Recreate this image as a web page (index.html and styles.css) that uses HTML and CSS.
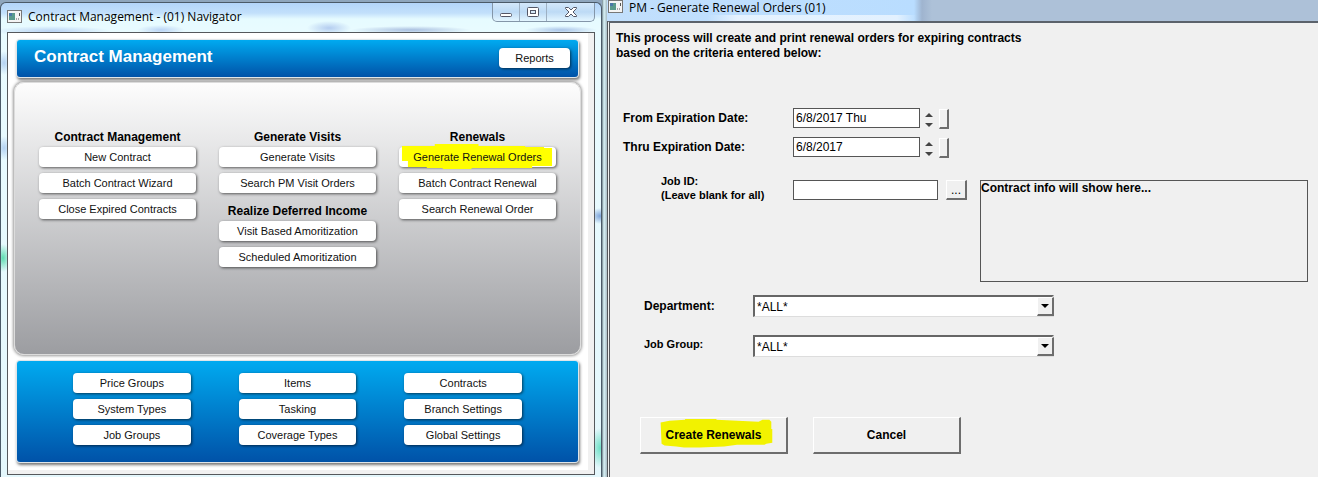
FILE: index.html
```html
<!DOCTYPE html>
<html lang="en">
<head>
    <meta charset="UTF-8">
    <title>Contract Management</title>
    <meta name="viewport" content="width=device-width, initial-scale=1.0"/>
    <link rel="stylesheet" href="styles.css">
</head>
<body>

<div class="desktop">

    <!--navigator window-->
    <section class="window navigator">
        <div class="titlebar">
            <svg class="app-icon" width="15" height="13" viewBox="0 0 15 13" aria-hidden="true">
                <rect x="0.5" y="0.5" width="14" height="12" fill="#f4f4f4" stroke="#777"/>
                <rect x="2" y="3" width="6" height="7" fill="#5a9a8c"/>
                <path d="M2 3h3v3H2z" fill="#4a78a8"/>
                <path d="M9 9h1M11 9h1M12.500 3v3" stroke="#555"/>
            </svg>
            <span class="title">Contract Management - (01) Navigator</span>
            <div class="window-buttons">
                <button aria-label="Minimize"><svg width="14" height="12" viewBox="0 0 14 12"><rect x="1.500" y="7.500" width="11" height="3" rx="1" fill="#fff" stroke="#535666"/></svg></button>
                <button aria-label="Maximize"><svg width="14" height="12" viewBox="0 0 14 12"><rect x="1.500" y="1.500" width="11" height="9" rx="1" fill="#fff" stroke="#535666"/><rect x="4.500" y="4.500" width="5" height="3" fill="#d5e8f8" stroke="#535666"/></svg></button>
                <button class="wide" aria-label="Close"><svg width="14" height="12" viewBox="0 0 14 12"><path d="M1.500 1.500h3L7 4l2.500-2.500h3v1L9 6l3.500 3.500v1h-3L7 8l-2.500 2.500h-3v-1L5 6 1.500 2.500z" fill="#fff" stroke="#535666"/></svg></button>
            </div>
        </div>

        <div class="client">
            <header class="banner">
                <h1>Contract Management</h1>
                <button class="pill">Reports</button>
            </header>

            <main class="panel">
                <div class="column">
                    <h2>Contract Management</h2>
                    <button class="pill">New Contract</button>
                    <button class="pill">Batch Contract Wizard</button>
                    <button class="pill">Close Expired Contracts</button>
                </div>
                <div class="column">
                    <h2>Generate Visits</h2>
                    <button class="pill">Generate Visits</button>
                    <button class="pill">Search PM Visit Orders</button>
                    <h2 class="second">Realize Deferred Income</h2>
                    <button class="pill">Visit Based Amoritization</button>
                    <button class="pill">Scheduled Amoritization</button>
                </div>
                <div class="column">
                    <h2>Renewals</h2>
                    <button class="pill marked">
                        <svg class="marker" viewBox="0 0 158 26" preserveAspectRatio="none" aria-hidden="true"><path d="M3 3H36V1H80V3H127V4H146V5H154V23H134V25H73V26H44V25H28V24H9V18H3z" fill="#ff0"/></svg>
                        <span>Generate Renewal Orders</span>
                    </button>
                    <button class="pill">Batch Contract Renewal</button>
                    <button class="pill">Search Renewal Order</button>
                </div>
            </main>

            <nav class="shortcuts">
                <button class="pill">Price Groups</button>
                <button class="pill">Items</button>
                <button class="pill">Contracts</button>
                <button class="pill">System Types</button>
                <button class="pill">Tasking</button>
                <button class="pill">Branch Settings</button>
                <button class="pill">Job Groups</button>
                <button class="pill">Coverage Types</button>
                <button class="pill">Global Settings</button>
            </nav>
        </div>
    </section>

    <!--renewal orders window-->
    <section class="window renewals">
        <div class="titlebar">
            <svg class="app-icon" width="15" height="13" viewBox="0 0 15 13" aria-hidden="true">
                <rect x="0.5" y="0.5" width="14" height="12" fill="#f4f4f4" stroke="#777"/>
                <rect x="2" y="3" width="6" height="7" fill="#5a9a8c"/>
                <path d="M2 3h3v3H2z" fill="#4a78a8"/>
                <path d="M9 9h1M11 9h1M12.500 3v3" stroke="#555"/>
            </svg>
            <span class="title">PM - Generate Renewal Orders (01)</span>
        </div>

        <form class="renewal-form">
            <p class="intro">This process will create and print renewal orders for expiring contracts<br>based on the criteria entered below:</p>

            <div class="row date-row">
                <label for="from_date">From Expiration Date:</label>
                <input id="from_date" type="text" value="6/8/2017 Thu">
                <span class="spinner">
                    <button type="button" class="up" aria-label="Next day"></button>
                    <button type="button" class="down" aria-label="Previous day"></button>
                </span>
                <button type="button" class="raised picker" aria-label="Pick from date"></button>
            </div>
            <div class="row date-row">
                <label for="thru_date">Thru Expiration Date:</label>
                <input id="thru_date" type="text" value="6/8/2017">
                <span class="spinner">
                    <button type="button" class="up" aria-label="Next day"></button>
                    <button type="button" class="down" aria-label="Previous day"></button>
                </span>
                <button type="button" class="raised picker" aria-label="Pick thru date"></button>
            </div>

            <div class="row job-row">
                <label for="job_id">Job ID:<br>(Leave blank for all)</label>
                <input id="job_id" type="text">
                <button type="button" class="raised browse" aria-label="Browse jobs">...</button>
                <div class="contract-info">Contract info will show here...</div>
            </div>

            <div class="row select-row">
                <label for="department">Department:</label>
                <span class="select-box">
                    <select id="department"><option>*ALL*</option></select>
                    <span class="arrow"></span>
                </span>
            </div>
            <div class="row select-row">
                <label for="job_group" class="small">Job Group:</label>
                <span class="select-box">
                    <select id="job_group"><option>*ALL*</option></select>
                    <span class="arrow"></span>
                </span>
            </div>

            <div class="actions">
                <button type="button" class="raised marked">
                    <svg class="marker" viewBox="0 0 148 37" preserveAspectRatio="none" aria-hidden="true"><path d="M20 5L29 3L45 2V1H77V2L120 4L124 2H131L133 4V12H134V27L128 28L126 29H98L85 31L60 32H44L36 31L24 30L21 28z" fill="#f2f200"/></svg>
                    <span>Create Renewals</span>
                </button>
                <button type="button" class="raised">Cancel</button>
            </div>
        </form>
    </section>

</div>

</body>
</html>
```
FILE: styles.css
```css
* {
    box-sizing: border-box;
}

body {
    margin: 0;
    background: #8fa6bd;
    font-family: "Liberation Sans", Arial, sans-serif;
    font-size: 12px;
    color: #000;
}

button, input, select {
    margin: 0;
    padding: 0;
    font: inherit;
    color: inherit;
}

h1, h2, p {
    margin: 0;
}

.desktop {
    display: grid;
    grid-template-columns: 602fr 716fr;
    min-height: 100vh;
    overflow: hidden;
}

.window {
    display: flex;
    flex-direction: column;
}

.titlebar {
    display: flex;
    font-family: "Open Sans", "Noto Sans", sans-serif;
    font-size: 12px;
}

.title {
    flex: 1;
    white-space: nowrap;
}

/* navigator */
.navigator {
    margin-top: 2px;
    padding: 0 6px 2px;
    border: 1px solid #4b5a68;
    border-bottom: 0;
    border-radius: 6px 6px 0 0;
    background:
        radial-gradient(ellipse 60px 5px at 50px 28px, #b9d3f4, transparent),
        radial-gradient(ellipse 24px 5px at 160px 27px, #b9d3f4, transparent),
        radial-gradient(ellipse 22px 7px at 328px 25px, #b4cdf0, transparent),
        radial-gradient(ellipse 60px 4px at 410px 27px, #a9bfe0, transparent),
        radial-gradient(ellipse 36px 4px at 560px 27px, #a9c4e8, transparent),
        radial-gradient(ellipse 8px 12px at 3px 60px, #b4d2f2, transparent),
        radial-gradient(ellipse 8px 12px at 3px 145px, #b4d2f2, transparent),
        radial-gradient(ellipse 8px 14px at 2px 255px, #5fdcb0, transparent),
        radial-gradient(ellipse 10px 8px at 599px 213px, #7ea4da, transparent),
        radial-gradient(ellipse 10px 20px at 599px 445px, #6fe0c6, transparent),
        linear-gradient(#b3d5fa 0, #c2e0fb 10px, #e6fbff 16px, #e9fbff 30px, #e4f7fc);
}

.navigator .titlebar {
    height: 29px;
}

.navigator .app-icon {
    margin-top: 7px;
}

.navigator .title {
    margin: 5px 0 0 6px;
    line-height: 18px;
}

.window-buttons {
    display: flex;
    height: 19px;
    border: 1px solid #8496a8;
    border-top: 0;
    border-radius: 0 0 5px 5px;
    background: linear-gradient(#d3e8fb, #bddaf5 50%, #e4f6ff);
}

.window-buttons button {
    display: flex;
    justify-content: center;
    align-items: center;
    width: 27px;
    border: 0;
    border-right: 1px solid #9db0c3;
    background: none;
}

.window-buttons .wide {
    width: 47px;
    border-right: 0;
}

.client {
    display: flex;
    flex: 1;
    flex-direction: column;
    padding: 7px 13px 12px 6px;
    border: 1px solid #55585c;
    background: #fff;
    box-shadow: inset -6px -4px 0 #f1f1f1;
}

.banner {
    display: flex;
    justify-content: space-between;
    align-items: center;
    height: 37px;
    margin: 0 3px;
    padding: 0 8px 0 17px;
    border-radius: 3px;
    background: linear-gradient(#00aaf0, #0052a8);
    box-shadow: 0 0 0 1px #dfe6ea, 1px 2px 3px 1px #777;
}

.banner h1 {
    margin-bottom: 3px;
    font-size: 17px;
    line-height: 20px;
    color: #fff;
}

.banner .pill {
    width: 71px;
    margin-bottom: 2px;
}

.pill {
    height: 20px;
    border: 0;
    border-radius: 4px;
    background: #fff;
    font-size: 11px;
    line-height: 20px;
    color: #111;
    box-shadow: 1px 1px 3px rgba(0, 0, 0, 0.6);
    white-space: nowrap;
}

.panel {
    display: grid;
    flex: 1;
    grid-template-columns: repeat(3, 1fr);
    gap: 23px;
    margin: 5px 0 6px;
    padding: 46px 24px 0;
    border: 1px solid #dcdcdc;
    border-radius: 10px;
    background: linear-gradient(#fdfdfd, #9c9da1);
    box-shadow: 0 0 3px 1px #999;
}

.column {
    display: flex;
    flex-direction: column;
    gap: 6px;
}

.column h2 {
    margin-bottom: -4px;
    font-size: 12px;
    line-height: 16px;
    text-align: center;
    white-space: nowrap;
}

.column .second {
    margin-top: 4px;
}

.marked {
    position: relative;
}

.marked span {
    position: relative;
}

.marker {
    position: absolute;
    inset: 0;
    width: 100%;
    height: 100%;
}

.pill .marker {
    top: -4px;
    height: 26px;
}

.shortcuts {
    display: grid;
    grid-template-columns: repeat(3, 1fr);
    align-content: start;
    gap: 6px 48px;
    height: 101px;
    margin: 0 3px;
    padding: 12px 56px;
    border-radius: 3px;
    background: linear-gradient(#00aaf0, #0052a8);
    box-shadow: 0 0 0 1px #dfe6ea, 1px 2px 3px 1px #777;
}

/* renewal orders */
.renewals {
    padding-left: 5px;
    background:
        linear-gradient(90deg, #71848c, #d9f3f8 2px, #a9bcc4 5px, transparent 5px),
        linear-gradient(90deg, #c2dffc 0, #b9ddff 312px, #9fb4cf 320px, #adc1d8 330px);
}

.renewals .titlebar {
    height: 21px;
    background: linear-gradient(90deg, transparent 100px, rgba(255, 255, 255, 0.6) 130px, rgba(255, 255, 255, 0.6) 290px, transparent 310px) 0 15px / 100% 6px no-repeat;
}

.renewals .app-icon {
    margin-left: 1px;
}

.renewals .title {
    margin-left: 6px;
    line-height: 16px;
}

.renewal-form {
    flex: 1;
    padding: 8px 10px 0 6px;
    border-left: 3px double #55585c;
    border-top: 2px solid #5b626b;
    background: #f0f0f0;
    font-weight: bold;
}

.intro {
    margin-bottom: 47px;
    line-height: 15px;
}

.row {
    display: flex;
    align-items: flex-start;
}

.row label {
    line-height: 20px;
}

.row input {
    height: 20px;
    padding: 0 2px;
    border: 1px solid #555;
    background: #fff;
    font-weight: normal;
}

.date-row {
    margin-bottom: 8px;
}

.date-row label {
    width: 177px;
    padding-left: 7px;
}

.date-row input {
    width: 127px;
}

.spinner {
    display: flex;
    flex-direction: column;
    gap: 6px;
    margin: 5px 6px 0 5px;
}

.spinner button {
    width: 8px;
    height: 4px;
    border: 0;
    background: #444;
}

.up {
    clip-path: polygon(50% 0, 100% 100%, 0 100%);
}

.down {
    clip-path: polygon(0 0, 100% 0, 50% 100%);
}

.raised {
    border: 1px solid #fff;
    border-right: 2px solid #6d6d6d;
    border-bottom: 2px solid #6d6d6d;
    background: #f0f0f0;
}

.picker {
    width: 10px;
    height: 20px;
    margin-top: 1px;
}

.job-row {
    margin-top: 22px;
}

.job-row label {
    width: 177px;
    margin-top: -6px;
    padding-left: 45px;
    font-size: 11px;
    line-height: 14px;
}

.job-row input {
    width: 145px;
}

.browse {
    width: 21px;
    height: 20px;
    margin: 0 13px 0 8px;
    font-weight: normal;
    line-height: 16px;
}

.contract-info {
    flex: 1;
    height: 102px;
    border: 1px solid #555;
    line-height: 15px;
}

.select-row {
    margin: 13px 0 18px;
}

.select-row + .select-row {
    margin-top: 0;
}

.select-row label {
    width: 137px;
    padding-left: 28px;
    line-height: 22px;
}

.select-row .small {
    font-size: 11px;
    line-height: 18px;
}

.select-box {
    position: relative;
    width: 301px;
}

.select-box select {
    display: block;
    width: 100%;
    height: 22px;
    padding: 0 18px 0 2px;
    border: 2px solid #666;
    border-right-color: #ddd;
    border-bottom: 1px solid #ddd;
    border-radius: 0;
    background: #fff;
    font-weight: normal;
    appearance: none;
}

.arrow {
    position: absolute;
    top: 2px;
    right: 0;
    display: flex;
    justify-content: center;
    align-items: center;
    width: 17px;
    height: 19px;
    border: 1px solid #fff;
    border-right: 2px solid #6d6d6d;
    border-bottom: 2px solid #6d6d6d;
    background: #f0f0f0;
    pointer-events: none;
}

.arrow::before {
    border: 4px solid transparent;
    border-top-color: #000;
    border-bottom: 0;
    content: "";
}

.actions {
    display: flex;
    gap: 25px;
    margin: 60px 0 0 24px;
}

.actions .raised {
    width: 148px;
    height: 37px;
    font-weight: bold;
}
```
